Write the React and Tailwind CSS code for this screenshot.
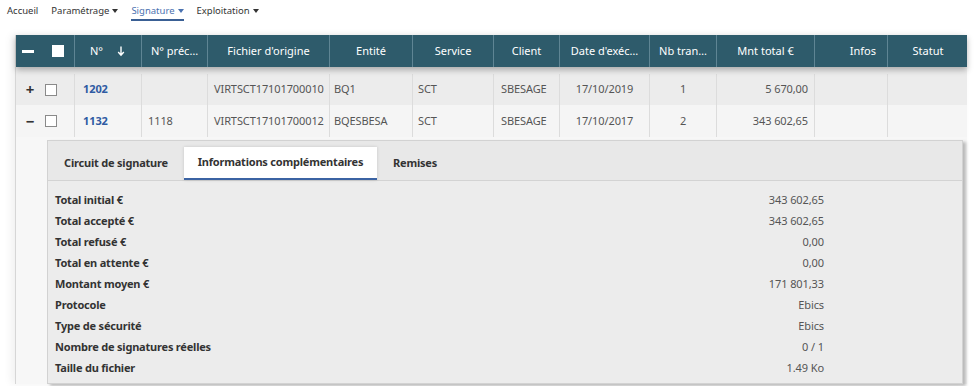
const FONT = { fontFamily: '"Noto Sans", "Open Sans", sans-serif' };

const COLS = 'grid grid-cols-[59px_67px_66px_122px_83px_81px_66px_90px_67px_98px_73px_80px]';

function Caret() {
  return <span className="ml-[3px] inline-block h-0 w-0 border-x-[3px] border-t-[4px] border-x-transparent border-t-current align-middle" />;
}

function Nav() {
  return (
    <nav className="flex h-[22px] items-start gap-[13px] pl-[7px] pt-[4px] text-[9.5px] text-[#333]">
      <span>Accueil</span>
      <span>Paramétrage<Caret /></span>
      <span className="border-b-2 border-[#3a5f94] pb-[1px] text-[#4a72b0]">Signature<Caret /></span>
      <span>Exploitation<Caret /></span>
    </nav>
  );
}

function Box({ className = '' }) {
  return <span className={`inline-block h-[12px] w-[12px] border border-[#8a8a8a] bg-white ${className}`} />;
}

const headers = [
  { label: "N° préc…", align: 'justify-center' },
  { label: "Fichier d'origine", align: 'justify-center' },
  { label: 'Entité', align: 'justify-center' },
  { label: 'Service', align: 'justify-center' },
  { label: 'Client', align: 'justify-center' },
  { label: "Date d'exéc…", align: 'justify-center' },
  { label: 'Nb tran…', align: 'justify-center' },
  { label: 'Mnt total €', align: 'justify-center' },
  { label: 'Infos', align: 'justify-end pr-[11px]' },
  { label: 'Statut', align: 'justify-center' },
];

const rows = [
  { sign: '+', id: '1202', prev: '', file: 'VIRTSCT17101700010', ent: 'BQ1', svc: 'SCT', client: 'SBESAGE', date: '17/10/2019', nb: '1', amount: '5 670,00' },
  { sign: '−', id: '1132', prev: '1118', file: 'VIRTSCT17101700012', ent: 'BQESBESA', svc: 'SCT', client: 'SBESAGE', date: '17/10/2017', nb: '2', amount: '343 602,65' },
];

const details = [
  ['Total initial €', '343 602,65'],
  ['Total accepté €', '343 602,65'],
  ['Total refusé €', '0,00'],
  ['Total en attente €', '0,00'],
  ['Montant moyen €', '171 801,33'],
  ['Protocole', 'Ebics'],
  ['Type de sécurité', 'Ebics'],
  ['Nombre de signatures réelles', '0 / 1'],
  ['Taille du fichier', '1.49 Ko'],
];

function Row({ r, first }) {
  const cell = 'flex items-center border-r border-[#dcdcdc]';
  return (
    <div className={`${COLS} ${first ? 'h-[38px] pt-[7px] bg-[#ececec]' : 'h-[32px] bg-[#f5f5f5]'} text-[11px] tracking-[-0.1px] text-[#555]`}>
      <div className={`${cell} gap-[9px] pl-[8px] text-[15px] font-bold text-[#333]`}>
        <span className="w-[12px] text-center leading-none">{r.sign}</span>
        <Box />
      </div>
      <div className={`${cell} pl-[8px] font-bold text-[#2f5ba3]`}>{r.id}</div>
      <div className={`${cell} pl-[6px]`}>{r.prev}</div>
      <div className={`${cell} pl-[6px]`}>{r.file}</div>
      <div className={`${cell} pl-[4px]`}>{r.ent}</div>
      <div className={`${cell} pl-[5px]`}>{r.svc}</div>
      <div className={`${cell} pl-[7px]`}>{r.client}</div>
      <div className={`${cell} justify-center`}>{r.date}</div>
      <div className={`${cell} justify-center`}>{r.nb}</div>
      <div className={`${cell} justify-end pr-[6px]`}>{r.amount}</div>
      <div className={cell} />
      <div className="flex items-center" />
    </div>
  );
}

export default function App() {
  return (
    <div className="h-[386px] w-[975px] overflow-hidden bg-white" style={FONT}>
      <Nav />
      <div className="ml-[15px] mt-[13px] w-[952px] border-l border-[#d6d6d6] bg-[#f7f7f7] shadow-[-4px_0_8px_rgba(0,0,0,0.06)]">
        <div className={`${COLS} relative z-10 h-[32px] bg-[#2e5b6b] text-[11px] text-white shadow-[0_3px_6px_rgba(0,0,0,0.28)]`}>
          <div className="flex items-center gap-[18px] border-r border-[#5f8594] pl-[6px]">
            <span className="h-[3px] w-[12px] bg-white" />
            <span className="h-[12px] w-[12px] bg-white" />
          </div>
          <div className="flex items-center border-r border-[#5f8594] pl-[15px]">
            <span>N°</span>
            <svg className="ml-[14px]" width="8" height="11" viewBox="0 0 8 11" aria-hidden="true">
              <path d="M4 0.5v8M1.2 6l2.8 3.2L6.8 6" fill="none" stroke="white" strokeWidth="1.4" />
            </svg>
          </div>
          {headers.map((h, i) => (
            <div key={h.label} className={`flex items-center ${h.align} ${i < headers.length - 1 ? 'border-r border-[#5f8594]' : ''}`}>
              {h.label}
            </div>
          ))}
        </div>
        {rows.map((r, i) => <Row key={r.id} r={r} first={i === 0} />)}
        <div className="pl-[31px] pt-[3px]">
          <div className="w-[916px] border border-[#d2d2d2] bg-[#ececec] pb-[4px] shadow-[3px_2px_3px_rgba(0,0,0,0.25)]">
            <div className="flex h-[40px] items-end border-b border-[#d3d3d3] bg-[#e8e8e8] text-[11px] font-bold tracking-[-0.2px] text-[#333]">
              <div className="flex h-[33px] w-[136px] items-center justify-center">Circuit de signature</div>
              <div className="flex h-[33px] w-[193px] items-center justify-center border-b-2 border-[#3b63a3] bg-white shadow-[0_0_3px_rgba(0,0,0,0.15)]">Informations complémentaires</div>
              <div className="flex h-[33px] items-center px-[16px]">Remises</div>
            </div>
            <div className="pl-[7px] pt-[9px]">
              {details.map(([k, v]) => (
                <div key={k} className="flex h-[21px] w-[769px] items-center justify-between text-[11px]">
                  <span className="font-bold tracking-[-0.2px] text-[#333]">{k}</span>
                  <span className="tracking-[-0.1px] text-[#555]">{v}</span>
                </div>
              ))}
            </div>
          </div>
        </div>
      </div>
    </div>
  );
}
